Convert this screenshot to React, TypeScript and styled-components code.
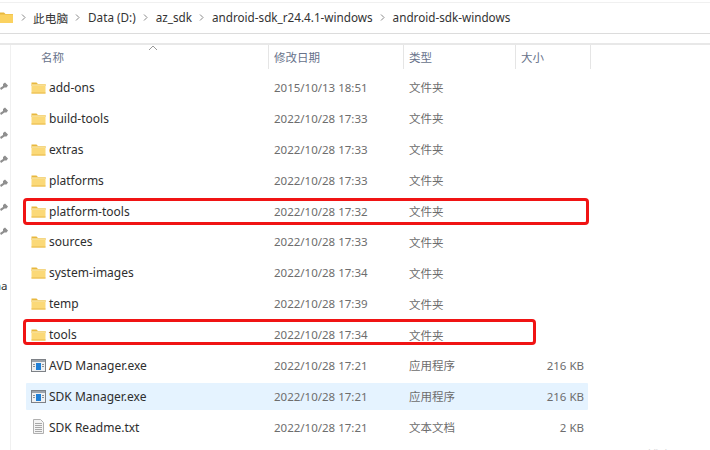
import React from "react";
import styled, { createGlobalStyle } from "styled-components";

const Global = createGlobalStyle`
  html, body { margin: 0; padding: 0; background: #fff; }
  body { width: 710px; height: 450px; overflow: hidden; font-family: "Noto Sans", "Noto Sans CJK SC", sans-serif; }
`;
const Page = styled.div`
  position: relative; width: 710px; height: 450px; overflow: hidden; background: #fff;
  display: flex; flex-direction: column; padding-top: 2px; box-sizing: border-box;
`;
const Crumbs = styled.div`
  height: 28px; padding-bottom: 2px; border-top: 1px solid #f0f0f0; border-bottom: 1px solid #dcdcdc;
  display: flex; align-items: center; font-size: 11.7px; color: #333; box-sizing: content-box;
`;
const Crumb = styled.span`white-space: nowrap;`;
const Chev = styled.svg`width: 5px; height: 7px; margin: 0 8px 0 7px; flex: none;`;
const HomeChev = styled(Chev)`margin: 0 7px 0 7px;`;
const Main = styled.div`
  margin-top: 9px; border-top: 2px solid #e8e8e8; flex: 1; display: flex; min-height: 0;
`;
const Side = styled.div`
  width: 10px; flex: none; border-right: 1px solid #f0f0f0; position: relative;
  font-size: 11.5px; color: #333; overflow: hidden;
`;
const PinMark = styled.svg<{ $y: number }>`position: absolute; left: 0; top: ${p => p.$y}px; width: 8px; height: 9px;`;
const Cut = styled.span`position: absolute; left: -6px; top: 233px; white-space: nowrap;`;
const Listing = styled.div`flex: 1; min-width: 0; display: flex; flex-direction: column;`;
const Head = styled.div`
  height: 24px; display: grid; grid-template-columns: 258px 135px 112px 75px; position: relative;
  font-size: 11.5px; color: #67728a;
`;
const HCell = styled.div<{ $pad: number }>`
  padding-left: ${p => p.$pad}px; border-right: 1px solid #e5e5e5; display: flex; align-items: center; height: 24px;
`;
const Sort = styled.svg`position: absolute; left: 137px; top: 0; width: 10px; height: 6px;`;
const Rows = styled.div`padding-top: 3px; display: flex; flex-direction: column; margin-left: 15px; width: 562px;`;
const Row = styled.div<{ $sel?: boolean }>`
  height: 30.9px; display: grid; grid-template-columns: 248px 135px 112px 63px; align-items: center; position: relative;
  font-size: 11.5px; color: #6d6d6d;
  &::before { content: ""; display: ${p => p.$sel ? "block" : "none"}; position: absolute; inset: 2px 0 2px 0; background: #e5f3ff; border-radius: 1px; }
`;
const NameCell = styled.div`display: flex; align-items: center; gap: 3px; padding-left: 5px; color: #2e2e2e; font-size: 12px; position: relative; white-space: nowrap;`;
const Cell = styled.div`position: relative; white-space: nowrap; font-size: 11.5px;`;
const SizeCell = styled(Cell)`text-align: right;`;
const RedBox = styled.div<{ $x: number; $y: number; $w: number; $h: number }>`
  position: absolute; left: ${p => p.$x}px; top: ${p => p.$y}px; width: ${p => p.$w}px; height: ${p => p.$h}px;
  border: 3px solid #f01414; border-radius: 4px; box-sizing: border-box;
`;
const Watermark = styled.div`
  position: absolute; left: 595px; top: 446px; font-size: 12px; color: #d8d8d8; letter-spacing: 1px; white-space: nowrap;
`;
const IconBox = styled.svg`width: 15px; height: 13px; flex: none;`;
const HomeIcon = styled(IconBox)`margin-left: -1px;`;
const TxtIcon = styled(IconBox)`height: 15px; margin-bottom: 1px;`;

const Folder = () => (
  <IconBox viewBox="0 0 15 13">
    <path d="M0.5 1.5h5l1.5 1.5h7.5v2H0.5z" fill="#e8b83e" />
    <rect x="0.5" y="3.5" width="14" height="9" fill="#fbd978" />
    <rect x="0.5" y="3.5" width="14" height="1" fill="#f6e4ab" />
    <rect x="0.5" y="11.5" width="14" height="1" fill="#eab94a" />
  </IconBox>
);
const Exe = () => (
  <IconBox viewBox="0 0 15 13">
    <rect x="0.5" y="0.5" width="14" height="12" fill="#eef0f2" stroke="#7d8186" />
    <rect x="1" y="1" width="13" height="2" fill="#9da3aa" />
    <rect x="5" y="4" width="5" height="7" fill="#1f7fd6" />
    <rect x="2" y="5" width="2" height="1" fill="#8b8f94" />
    <rect x="2" y="7" width="2" height="1" fill="#8b8f94" />
    <rect x="11" y="5" width="2" height="1" fill="#8b8f94" />
    <rect x="11" y="7" width="2" height="1" fill="#8b8f94" />
  </IconBox>
);
const Txt = () => (
  <TxtIcon viewBox="0 0 15 15">
    <path d="M2.5 0.5h7l3 3v11h-10z" fill="#f4f4f4" stroke="#b0b0b0" />
    <path d="M4 4.5h7M4 6.5h7M4 8.5h7M4 10.5h7M4 12.5h7" stroke="#a8a8a8" />
  </TxtIcon>
);
const Chevron = () => (
  <Chev viewBox="0 0 5 7"><path d="M1 0.5 4 3.5 1 6.5" fill="none" stroke="#888" strokeWidth="1" /></Chev>
);

type Item = { n: string; d: string; t: string; s?: string; k?: "exe" | "txt"; sel?: boolean };
const items: Item[] = [
  { n: "add-ons", d: "2015/10/13 18:51", t: "文件夹" },
  { n: "build-tools", d: "2022/10/28 17:33", t: "文件夹" },
  { n: "extras", d: "2022/10/28 17:33", t: "文件夹" },
  { n: "platforms", d: "2022/10/28 17:33", t: "文件夹" },
  { n: "platform-tools", d: "2022/10/28 17:32", t: "文件夹" },
  { n: "sources", d: "2022/10/28 17:33", t: "文件夹" },
  { n: "system-images", d: "2022/10/28 17:34", t: "文件夹" },
  { n: "temp", d: "2022/10/28 17:39", t: "文件夹" },
  { n: "tools", d: "2022/10/28 17:34", t: "文件夹" },
  { n: "AVD Manager.exe", d: "2022/10/28 17:21", t: "应用程序", s: "216 KB", k: "exe" },
  { n: "SDK Manager.exe", d: "2022/10/28 17:21", t: "应用程序", s: "216 KB", k: "exe", sel: true },
  { n: "SDK Readme.txt", d: "2022/10/28 17:21", t: "文本文档", s: "2 KB", k: "txt" },
];
const pins = [37, 62, 86, 110, 134, 158, 182];

export default function App() {
  return (
    <Page>
      <Global />
      <Crumbs>
        <HomeIcon viewBox="0 0 15 13">
          <path d="M0 1.5h5l1.5 1.5H14v2H0z" fill="#e8b83e" />
          <rect x="0" y="3.5" width="14" height="8.5" fill="#fbd260" />
        </HomeIcon>
        <HomeChev viewBox="0 0 5 7"><path d="M1 0.5 4 3.5 1 6.5" fill="none" stroke="#888" strokeWidth="1" /></HomeChev>
        <Crumb>此电脑</Crumb>
        <Chevron /><Crumb>Data (D:)</Crumb>
        <Chevron /><Crumb>az_sdk</Crumb>
        <Chevron /><Crumb>android-sdk_r24.4.1-windows</Crumb>
        <Chevron /><Crumb>android-sdk-windows</Crumb>
      </Crumbs>
      <Main>
        <Side>
          {pins.map(y => (
            <PinMark key={y} $y={y} viewBox="0 0 8 9">
              <path d="M0 6 3 4 3 2 5 0.5 8 3.5 6.5 5.5 4.5 5.5 1 8z" fill="#8f8f8f" />
            </PinMark>
          ))}
          <Cut>na</Cut>
        </Side>
        <Listing>
          <Head>
            <Sort viewBox="0 0 10 6"><path d="M1 5 5 1 9 5" fill="none" stroke="#9a9a9a" /></Sort>
            <HCell $pad={30}>名称</HCell>
            <HCell $pad={5}>修改日期</HCell>
            <HCell $pad={5}>类型</HCell>
            <HCell $pad={5}>大小</HCell>
          </Head>
          <Rows>
            {items.map(it => (
              <Row key={it.n} $sel={it.sel}>
                <NameCell>
                  {it.k === "exe" ? <Exe /> : it.k === "txt" ? <Txt /> : <Folder />}
                  {it.n}
                </NameCell>
                <Cell>{it.d}</Cell>
                <Cell>{it.t}</Cell>
                <SizeCell>{it.s}</SizeCell>
              </Row>
            ))}
          </Rows>
        </Listing>
      </Main>
      <RedBox $x={23} $y={198} $w={566} $h={27} />
      <RedBox $x={23} $y={319} $w={513} $h={26} />
      <Watermark>CSDN @博客</Watermark>
    </Page>
  );
}
